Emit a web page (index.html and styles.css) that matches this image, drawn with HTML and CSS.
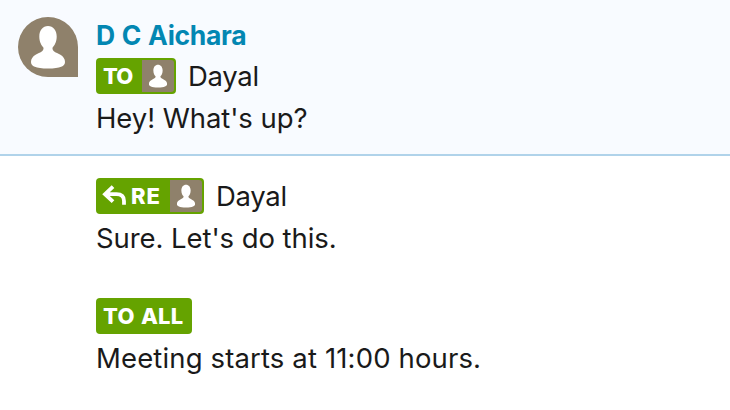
FILE: index.html
```html
<!DOCTYPE html>
<html lang="en">
<head>
<meta charset="utf-8">
<title>Chat</title>
<link rel="stylesheet" href="styles.css">
</head>
<body>
<svg width="0" height="0" class="defs" aria-hidden="true">
  <symbol id="person" viewBox="0 0 60 60">
    <path fill="#fff" d="M30 9C24.800 9 21.300 13.500 21.300 19.500C21.300 25 23.500 28.500 25.500 30.700C25.900 34.500 22 35.200 18 37.500C14.500 39.500 13 42 13 45C13 49.200 17.500 51.500 30 51.500C42.500 51.500 47 49.200 47 45C47 42 45.500 39.500 42 37.500C38 35.200 34.100 34.500 34.500 30.700C36.500 28.500 38.700 25 38.700 19.500C38.700 13.500 35.200 9 30 9Z"/>
  </symbol>
</svg>
<section class="message">
  <div class="avatar"><svg><use href="#person"/></svg></div>
  <div class="body">
    <div class="name">D C Aichara</div>
    <div class="recipient">
      <span class="badge to"><span class="label">TO</span><svg class="mini"><use href="#person"/></svg></span>
      <span class="person-name">Dayal</span>
    </div>
    <p class="text hey">Hey! What's up?</p>
  </div>
</section>
<section class="thread">
  <div class="recipient">
    <span class="badge re"><svg class="reply" viewBox="0 0 26 24"><path d="M11 2.700L3 10.200L11 17.700M3.500 10.200H14.500Q22 10.200 22 17V20.800" fill="none" stroke="#fff" stroke-width="3.800"/></svg><span class="label">RE</span><svg class="mini"><use href="#person"/></svg></span>
    <span class="person-name">Dayal</span>
  </div>
  <p class="text sure">Sure. Let's do this.</p>
  <div class="recipient all"><span class="badge to-all"><span class="label">TO ALL</span></span></div>
  <p class="text meeting">Meeting starts at 11:00 hours.</p>
</section>
</body>
</html>
```

FILE: styles.css
```css
* { box-sizing: border-box; }
body {
  margin: 0;
  background: #fff;
  color: #1a1a1a;
  font-family: Inter, "Liberation Sans", sans-serif;
  font-size: 27.5px;
  white-space: nowrap;
}
.defs { display: block; }
.message {
  display: flex;
  gap: 18px;
  height: 156px;
  padding: 17px 18px 0;
  background: #f8fbff;
  border-bottom: 2px solid #b0d3ea;
}
.avatar {
  width: 60px;
  height: 60px;
  background: #8f816b;
  border-radius: 50% 50% 0 50%;
}
.avatar svg { display: block; width: 60px; height: 60px; }
.name {
  height: 41px;
  line-height: 37px;
  font-size: 26.5px;
  font-weight: 700;
  letter-spacing: -0.3px;
  word-spacing: 1px;
  color: #0387b2;
}
.recipient {
  display: flex;
  align-items: center;
  gap: 12px;
  height: 36px;
}
.person-name { letter-spacing: -0.3px; }
.badge {
  display: flex;
  align-items: center;
  height: 36px;
  padding: 2px 2px 2px 7px;
  border-radius: 4px;
  background: #65a300;
  color: #fff;
}
.to { width: 80px; }
.re { width: 108px; padding-left: 6px; }
.to-all { width: 96px; }
.label {
  font-size: 22px;
  font-weight: 800;
  line-height: 32px;
}
.to .label { letter-spacing: -0.8px; }
.re .label { letter-spacing: 1px; }
.to-all .label { letter-spacing: 0.3px; word-spacing: 1px; }
.mini {
  width: 32px;
  height: 32px;
  margin-left: auto;
  background: #8f816b;
  border-radius: 0 3px 3px 0;
}
.reply { width: 26px; height: 24px; margin-right: 3px; }
.text { margin: 4px 0 0; height: 40px; line-height: 40px; }
.hey, .sure { letter-spacing: -0.07px; }
.meeting { letter-spacing: 0.14px; }
.thread { padding: 22px 0 0 96px; }
.all { margin-top: 40px; }
```
